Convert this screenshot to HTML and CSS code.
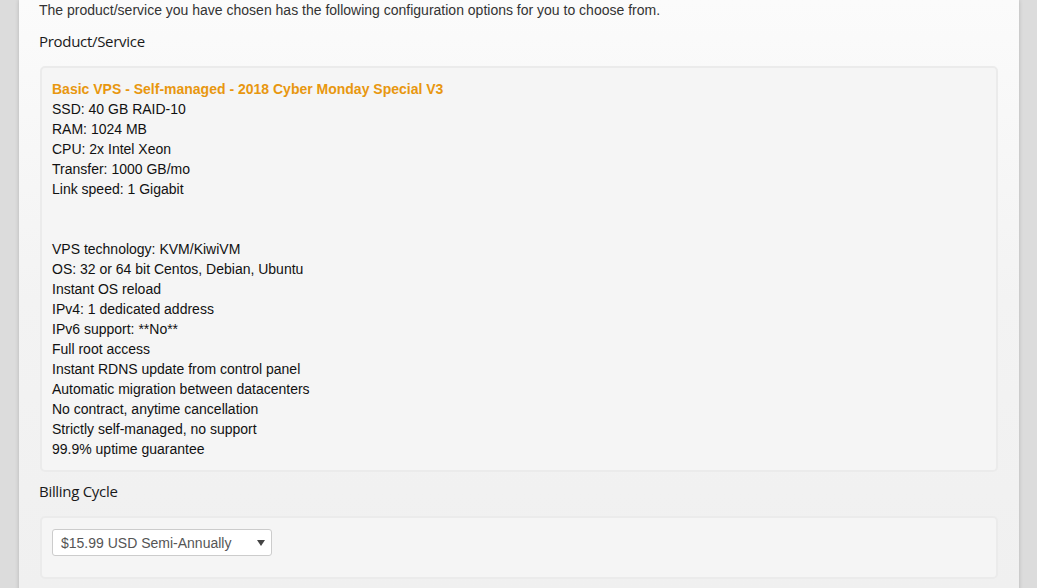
FILE: index.html
```html
<!DOCTYPE html>
<html>
<head>
<meta charset="utf-8">
<link rel="stylesheet" href="styles.css">
</head>
<body>
<div class="page">
  <main class="panel">
    <p class="intro">The product/service you have chosen has the following configuration options for you to choose from.</p>
    <h3 class="section-title">Product/Service</h3>
    <div class="well">
      <div class="product-name">Basic VPS - Self-managed - 2018 Cyber Monday Special V3</div>
      <div>SSD: 40 GB RAID-10</div>
      <div>RAM: 1024 MB</div>
      <div>CPU: 2x Intel Xeon</div>
      <div>Transfer: 1000 GB/mo</div>
      <div>Link speed: 1 Gigabit</div>
      <div class="blank"></div>
      <div class="blank"></div>
      <div>VPS technology: KVM/KiwiVM</div>
      <div>OS: 32 or 64 bit Centos, Debian, Ubuntu</div>
      <div>Instant OS reload</div>
      <div>IPv4: 1 dedicated address</div>
      <div>IPv6 support: **No**</div>
      <div>Full root access</div>
      <div>Instant RDNS update from control panel</div>
      <div>Automatic migration between datacenters</div>
      <div>No contract, anytime cancellation</div>
      <div>Strictly self-managed, no support</div>
      <div>99.9% uptime guarantee</div>
    </div>
    <h3 class="section-title">Billing Cycle</h3>
    <div class="well well-billing">
      <div class="select">
        <span>$15.99 USD Semi-Annually</span>
        <svg class="caret" width="8" height="6" viewBox="0 0 8 6"><path d="M0 0H8L4 6Z" fill="#444"/></svg>
      </div>
    </div>
  </main>
</div>
</body>
</html>
```

FILE: styles.css
```css
html, body {
  margin: 0;
  padding: 0;
}
body {
  background: #dcdcdc;
  font-family: "Liberation Sans", Arial, sans-serif;
  font-size: 14px;
  line-height: 20px;
  color: #222;
  height: 588px;
  overflow: hidden;
}
.page {
  display: flex;
  justify-content: flex-start;
  padding-left: 19px;
}
.panel {
  width: 1000px;
  box-sizing: border-box;
  min-height: 588px;
  padding: 0 20px 20px 20px;
  background: linear-gradient(to bottom, #fbfbfb 0px, #f3f3f3 300px, #f0f0f0 588px);
  box-shadow: 0 0 4px rgba(0, 0, 0, 0.18);
}
.intro {
  margin: 0;
  color: #333;
}
.section-title {
  margin: 10px 0 14px 0;
  font-family: "Open Sans", "Noto Sans", sans-serif;
  font-weight: 400;
  font-size: 15px;
  line-height: 22px;
  color: #1a1a1a;
  letter-spacing: -0.3px;
}
.well + .section-title {
  margin-top: 8px;
}
.well {
  margin: 0 1px;
  padding: 11px 10px 11px 10px;
  background: #f5f5f5;
  border: 2px solid #ebebeb;
  border-radius: 5px;
  color: #111;
}
.product-name {
  color: #e8970f;
  font-weight: bold;
}
.blank {
  height: 20px;
}
.well-billing {
  padding: 11px 10px 21px 10px;
}
.select {
  width: 220px;
  height: 27px;
  box-sizing: border-box;
  border: 1px solid #cccccc;
  border-radius: 3px;
  background: #fff;
  display: flex;
  align-items: center;
  justify-content: space-between;
  padding: 0 6px 0 8px;
  color: #555;
  font-size: 14px;
}
.caret {
  display: block;
}
```
